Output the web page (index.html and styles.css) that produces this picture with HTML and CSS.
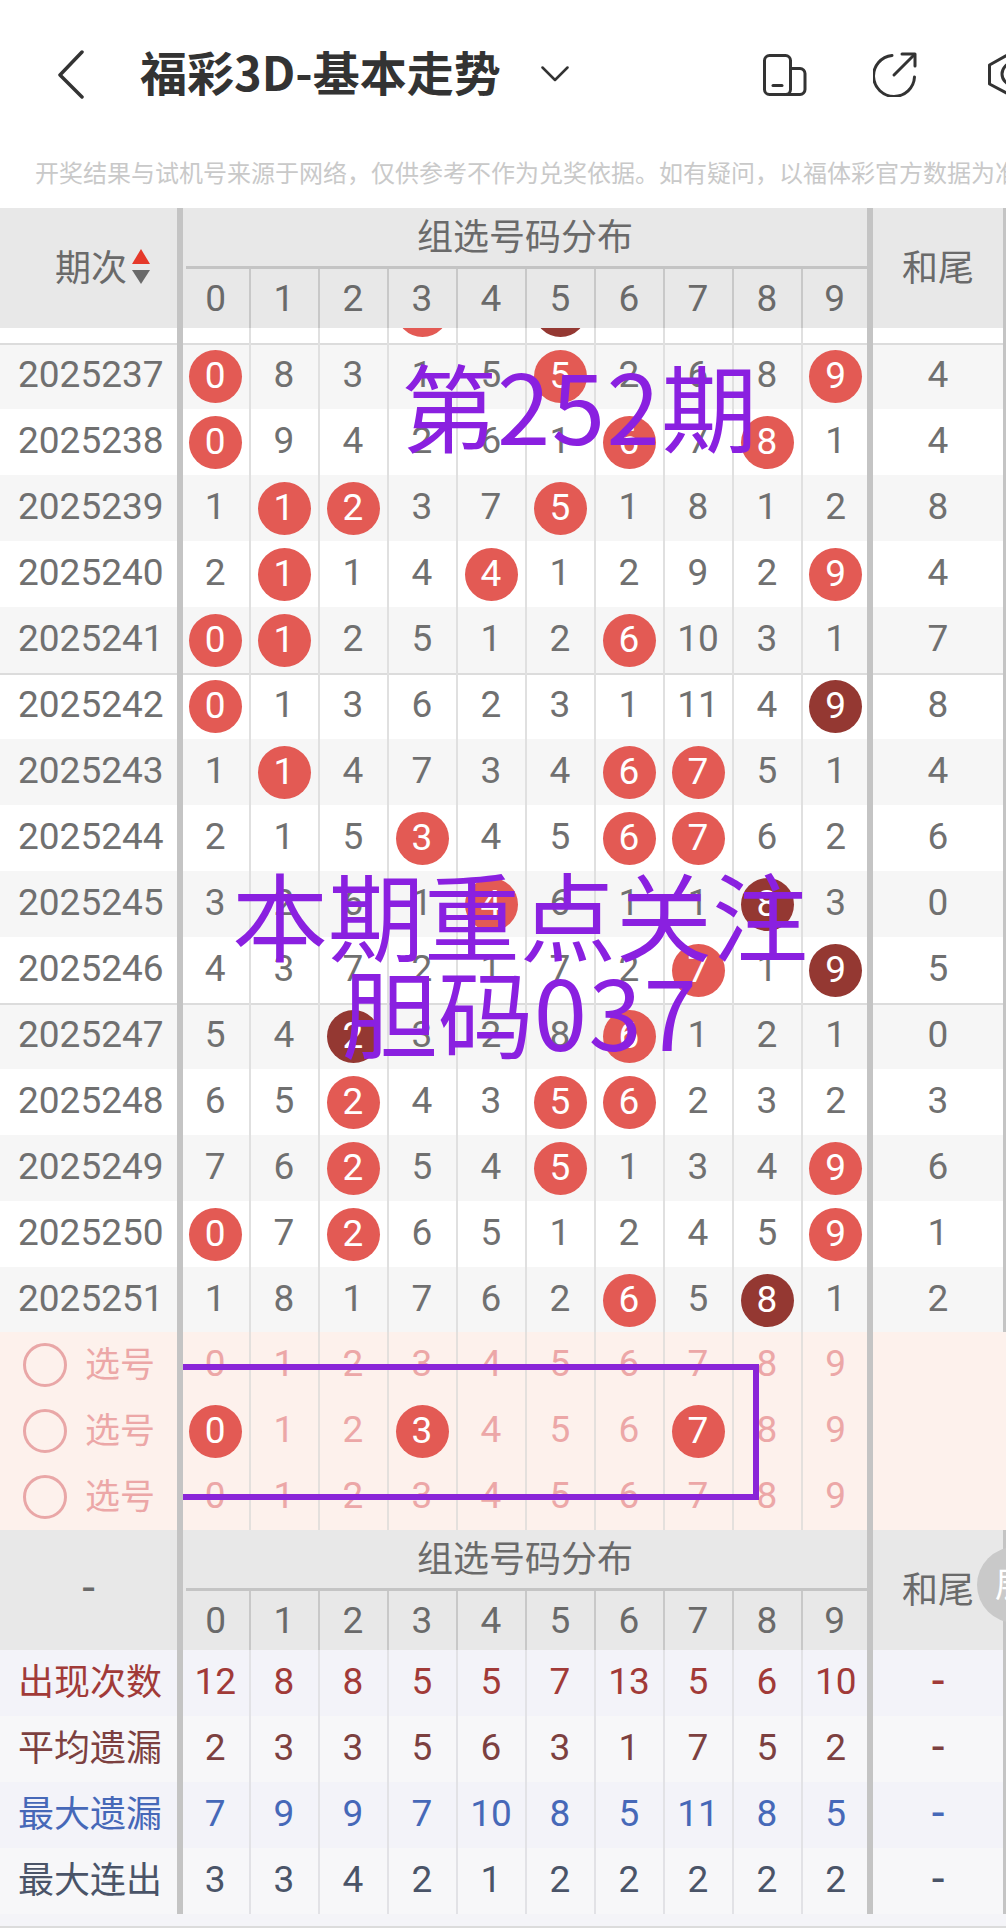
FILE: index.html
```html
<!DOCTYPE html>
<html lang="zh">
<head>
<meta charset="utf-8">
<title>福彩3D-基本走势</title>
<link rel="stylesheet" href="styles.css">
</head>
<body>
<div class="screen">
  <header class="topbar">
    <svg class="ic-back" viewBox="0 0 28 50"><path d="M25 3 3 26l22 22"/></svg>
    <h1 class="title">福彩3D-基本走势</h1>
    <svg class="ic-caret" viewBox="0 0 28 16"><path d="M1.5 1.5 14 14 26.500 1.500"/></svg>
    <div class="top-icons">
      <svg class="ic ic-phone" viewBox="0 0 44 42"><rect x="1.500" y="1.500" width="26" height="39" rx="5"/><path d="M27.500 14.500H37a5 5 0 0 1 5 5V35.500a5 5 0 0 1-5 5H22.500"/><path d="M10 31.500h9"/></svg>
      <svg class="ic ic-share" viewBox="0 0 46 46"><path d="M41.500 26A20.500 20.500 0 1 1 19 4.500"/><path d="M21 24 41.500 3.500"/><path d="M29 3H42V15"/></svg>
      <svg class="ic ic-hex" viewBox="0 0 40 46"><path d="M24 1.500 1.500 14V33L24 45 46 33V14Z"/><circle cx="25" cy="23" r="11"/></svg>
    </div>
  </header>
  <p class="notice">开奖结果与试机号来源于网络，仅供参考不作为兑奖依据。如有疑问，以福体彩官方数据为准。</p>

  <section class="thead">
    <div class="th-side th-period"><span class="th-label">期次</span><svg class="sort" viewBox="0 0 18 35"><path class="up" d="M9 0 18 15H0Z"/><path class="down" d="M0 21H18L9 35Z"/></svg></div>
    <div class="th-main">
      <div class="th-title">组选号码分布</div>
      <div class="th-nums"><span>0</span><span>1</span><span>2</span><span>3</span><span>4</span><span>5</span><span>6</span><span>7</span><span>8</span><span>9</span></div>
    </div>
    <div class="th-end"><span class="th-label">和尾</span></div>
  </section>

  <section class="tbody">
    <div class="row first"><span class="id">2025236</span><span class="c"></span><span class="c"></span><span class="c"></span><span class="c"><b class="ball">2</b></span><span class="c"></span><span class="c"><b class="ball dark">9</b></span><span class="c"></span><span class="c"></span><span class="c"></span><span class="c"></span><span class="end"></span></div>
    <div class="row sep"><span class="id">2025237</span><span class="c"><b class="ball">0</b></span><span class="c">8</span><span class="c">3</span><span class="c">1</span><span class="c">5</span><span class="c"><b class="ball">5</b></span><span class="c">2</span><span class="c">6</span><span class="c">8</span><span class="c"><b class="ball">9</b></span><span class="end">4</span></div>
    <div class="row"><span class="id">2025238</span><span class="c"><b class="ball">0</b></span><span class="c">9</span><span class="c">4</span><span class="c">2</span><span class="c">6</span><span class="c">1</span><span class="c"><b class="ball">6</b></span><span class="c">7</span><span class="c"><b class="ball">8</b></span><span class="c">1</span><span class="end">4</span></div>
    <div class="row"><span class="id">2025239</span><span class="c">1</span><span class="c"><b class="ball">1</b></span><span class="c"><b class="ball">2</b></span><span class="c">3</span><span class="c">7</span><span class="c"><b class="ball">5</b></span><span class="c">1</span><span class="c">8</span><span class="c">1</span><span class="c">2</span><span class="end">8</span></div>
    <div class="row"><span class="id">2025240</span><span class="c">2</span><span class="c"><b class="ball">1</b></span><span class="c">1</span><span class="c">4</span><span class="c"><b class="ball">4</b></span><span class="c">1</span><span class="c">2</span><span class="c">9</span><span class="c">2</span><span class="c"><b class="ball">9</b></span><span class="end">4</span></div>
    <div class="row"><span class="id">2025241</span><span class="c"><b class="ball">0</b></span><span class="c"><b class="ball">1</b></span><span class="c">2</span><span class="c">5</span><span class="c">1</span><span class="c">2</span><span class="c"><b class="ball">6</b></span><span class="c">10</span><span class="c">3</span><span class="c">1</span><span class="end">7</span></div>
    <div class="row sep"><span class="id">2025242</span><span class="c"><b class="ball">0</b></span><span class="c">1</span><span class="c">3</span><span class="c">6</span><span class="c">2</span><span class="c">3</span><span class="c">1</span><span class="c">11</span><span class="c">4</span><span class="c"><b class="ball dark">9</b></span><span class="end">8</span></div>
    <div class="row"><span class="id">2025243</span><span class="c">1</span><span class="c"><b class="ball">1</b></span><span class="c">4</span><span class="c">7</span><span class="c">3</span><span class="c">4</span><span class="c"><b class="ball">6</b></span><span class="c"><b class="ball">7</b></span><span class="c">5</span><span class="c">1</span><span class="end">4</span></div>
    <div class="row"><span class="id">2025244</span><span class="c">2</span><span class="c">1</span><span class="c">5</span><span class="c"><b class="ball">3</b></span><span class="c">4</span><span class="c">5</span><span class="c"><b class="ball">6</b></span><span class="c"><b class="ball">7</b></span><span class="c">6</span><span class="c">2</span><span class="end">6</span></div>
    <div class="row"><span class="id">2025245</span><span class="c">3</span><span class="c">2</span><span class="c">6</span><span class="c">1</span><span class="c"><b class="ball">4</b></span><span class="c">6</span><span class="c">1</span><span class="c">1</span><span class="c"><b class="ball dark">8</b></span><span class="c">3</span><span class="end">0</span></div>
    <div class="row"><span class="id">2025246</span><span class="c">4</span><span class="c">3</span><span class="c">7</span><span class="c">2</span><span class="c">1</span><span class="c">7</span><span class="c">2</span><span class="c"><b class="ball">7</b></span><span class="c">1</span><span class="c"><b class="ball dark">9</b></span><span class="end">5</span></div>
    <div class="row sep"><span class="id">2025247</span><span class="c">5</span><span class="c">4</span><span class="c"><b class="ball dark">2</b></span><span class="c">3</span><span class="c">2</span><span class="c">8</span><span class="c"><b class="ball">6</b></span><span class="c">1</span><span class="c">2</span><span class="c">1</span><span class="end">0</span></div>
    <div class="row"><span class="id">2025248</span><span class="c">6</span><span class="c">5</span><span class="c"><b class="ball">2</b></span><span class="c">4</span><span class="c">3</span><span class="c"><b class="ball">5</b></span><span class="c"><b class="ball">6</b></span><span class="c">2</span><span class="c">3</span><span class="c">2</span><span class="end">3</span></div>
    <div class="row"><span class="id">2025249</span><span class="c">7</span><span class="c">6</span><span class="c"><b class="ball">2</b></span><span class="c">5</span><span class="c">4</span><span class="c"><b class="ball">5</b></span><span class="c">1</span><span class="c">3</span><span class="c">4</span><span class="c"><b class="ball">9</b></span><span class="end">6</span></div>
    <div class="row"><span class="id">2025250</span><span class="c"><b class="ball">0</b></span><span class="c">7</span><span class="c"><b class="ball">2</b></span><span class="c">6</span><span class="c">5</span><span class="c">1</span><span class="c">2</span><span class="c">4</span><span class="c">5</span><span class="c"><b class="ball">9</b></span><span class="end">1</span></div>
    <div class="row"><span class="id">2025251</span><span class="c">1</span><span class="c">8</span><span class="c">1</span><span class="c">7</span><span class="c">6</span><span class="c">2</span><span class="c"><b class="ball">6</b></span><span class="c">5</span><span class="c"><b class="ball dark">8</b></span><span class="c">1</span><span class="end">2</span></div>
  </section>

  <section class="picks">
    <div class="row pick"><span class="id"><i class="radio"></i><span class="pick-label">选号</span></span><span class="c">0</span><span class="c">1</span><span class="c">2</span><span class="c">3</span><span class="c">4</span><span class="c">5</span><span class="c">6</span><span class="c">7</span><span class="c">8</span><span class="c">9</span><span class="end"></span></div>
    <div class="row pick"><span class="id"><i class="radio"></i><span class="pick-label">选号</span></span><span class="c"><b class="ball">0</b></span><span class="c">1</span><span class="c">2</span><span class="c"><b class="ball">3</b></span><span class="c">4</span><span class="c">5</span><span class="c">6</span><span class="c"><b class="ball">7</b></span><span class="c">8</span><span class="c">9</span><span class="end"></span></div>
    <div class="row pick"><span class="id"><i class="radio"></i><span class="pick-label">选号</span></span><span class="c">0</span><span class="c">1</span><span class="c">2</span><span class="c">3</span><span class="c">4</span><span class="c">5</span><span class="c">6</span><span class="c">7</span><span class="c">8</span><span class="c">9</span><span class="end"></span></div>
  </section>

  <section class="thead">
    <div class="th-side th-dash">-</div>
    <div class="th-main">
      <div class="th-title">组选号码分布</div>
      <div class="th-nums"><span>0</span><span>1</span><span>2</span><span>3</span><span>4</span><span>5</span><span>6</span><span>7</span><span>8</span><span>9</span></div>
    </div>
    <div class="th-end"><span class="th-label">和尾</span></div>
  </section>

  <section class="stats">
    <div class="row stat s-red"><span class="id">出现次数</span><span class="c">12</span><span class="c">8</span><span class="c">8</span><span class="c">5</span><span class="c">5</span><span class="c">7</span><span class="c">13</span><span class="c">5</span><span class="c">6</span><span class="c">10</span><span class="end">-</span></div>
    <div class="row stat s-brown"><span class="id">平均遗漏</span><span class="c">2</span><span class="c">3</span><span class="c">3</span><span class="c">5</span><span class="c">6</span><span class="c">3</span><span class="c">1</span><span class="c">7</span><span class="c">5</span><span class="c">2</span><span class="end">-</span></div>
    <div class="row stat s-blue"><span class="id">最大遗漏</span><span class="c">7</span><span class="c">9</span><span class="c">9</span><span class="c">7</span><span class="c">10</span><span class="c">8</span><span class="c">5</span><span class="c">11</span><span class="c">8</span><span class="c">5</span><span class="end">-</span></div>
    <div class="row stat s-slate"><span class="id">最大连出</span><span class="c">3</span><span class="c">3</span><span class="c">4</span><span class="c">2</span><span class="c">1</span><span class="c">2</span><span class="c">2</span><span class="c">2</span><span class="c">2</span><span class="c">2</span><span class="end">-</span></div>
  </section>
  <div class="page-end"></div>

  <div class="fab">展</div>
  <div class="mark mark-period">第<span class="wide">252</span>期</div>
  <div class="mark mark-focus">本期重点关注<br>胆码<span class="wide">037</span></div>
  <div class="mark-box"></div>
</div>
</body>
</html>
```
FILE: styles.css
```css
* { box-sizing: border-box; }
html, body { margin: 0; padding: 0; background: #fff; overflow: hidden; }
body { font-family: Roboto, "Noto Sans CJK SC", "Noto Sans", sans-serif; color: #707070; }

.screen { position: relative; width: 1006px; height: 1928px; overflow: hidden; }

/* top bar */
.topbar { display: flex; align-items: center; height: 148px; padding-left: 57px; }
.ic-back { width: 28px; height: 50px; flex: none; fill: none; stroke: #333; stroke-width: 3.500; stroke-linecap: round; stroke-linejoin: round; }
.title { margin: 0 0 7px 55px; font-family: "Noto Sans CJK SC", sans-serif; font-size: 47px; font-weight: 700; line-height: 50px; color: #333; white-space: nowrap; }
.ic-caret { width: 28px; height: 16px; margin-left: 40px; flex: none; fill: none; stroke: #333; stroke-width: 2.500; stroke-linecap: round; stroke-linejoin: round; }
.top-icons { display: flex; align-items: center; margin-left: auto; width: 243px; height: 46px; overflow: hidden; }
.ic { flex: none; fill: none; stroke: #333; stroke-width: 3; stroke-linecap: round; stroke-linejoin: round; }
.ic-phone { width: 44px; height: 42px; margin-top: 2px; }
.ic-share { width: 46px; height: 46px; margin-left: 66px; }
.ic-hex { width: 40px; height: 46px; margin-left: 69px; overflow: visible; }

.notice { margin: 0; height: 60px; padding-left: 35px; font-family: "Noto Sans CJK SC", sans-serif; font-size: 24px; line-height: 48px; color: #c9c9c9; white-space: nowrap; overflow: hidden; }

/* table header */
.thead { display: grid; grid-template-columns: 183px 684px 139px; height: 120px; background: #e8e8e8; font-family: "Noto Sans CJK SC", Roboto, sans-serif; font-size: 36px; color: #6a6a6a; }
.th-label { padding-bottom: 7px; }
.th-side { display: flex; align-items: center; border-right: 6px solid #c4c4c4; }
.th-period { padding-left: 55px; gap: 5px; }
.th-dash { justify-content: center; font-family: Roboto, sans-serif; font-size: 46px; padding-bottom: 6px; }
.sort { width: 18px; height: 35px; margin-top: -4px; }
.sort .up { fill: #e5392a; }
.sort .down { fill: #6a6a6a; }
.th-main { display: flex; flex-direction: column; }
.th-title { height: 58px; text-align: center; line-height: 53px; font-size: 36px; }
.th-nums { display: grid; grid-template-columns: 64.500px repeat(8, 69px) 64.500px; flex: 1; margin-left: 3px; border-top: 3px solid #c4c4c4; font-family: Roboto, sans-serif; font-size: 37px; }
.th-nums span { display: flex; align-items: center; justify-content: center; border-right: 2px solid #c8c8c8; }
.th-nums span:first-child { padding-right: 3px; }
.th-nums span:last-child { border-right: 0; }
.th-end { display: flex; align-items: center; justify-content: center; border-left: 6px solid #c4c4c4; border-right: 3px solid #c4c4c4; }

/* rows */
.tbody { height: 1004px; overflow: hidden; }
.row { display: grid; grid-template-columns: 183px 67.500px repeat(8, 69px) 64.500px 139px; height: 66px; background: #fff; font-size: 37px; color: #707070; }
.tbody .row:nth-child(even) { background: #f6f6f6; }
.row.first { margin-top: -51px; }
.row.sep { box-shadow: inset 0 2px 0 #dcdcdc; }
.id { display: flex; align-items: center; padding: 0 0 4px 18px; border-right: 6px solid #c4c4c4; white-space: nowrap; }
.c { display: flex; align-items: center; justify-content: center; padding-bottom: 3px; border-right: 2px solid #e0e0e0; }
.c:has(.ball) { padding-bottom: 0; }
.c:nth-child(2) { padding-right: 1px; }
.c:nth-child(11) { border-right: 0; padding-left: 2px; }
.end { display: flex; align-items: center; justify-content: center; padding-bottom: 3px; border-left: 6px solid #c4c4c4; border-right: 3px solid #c4c4c4; }
.ball { display: flex; align-items: center; justify-content: center; width: 53px; height: 53px; padding-bottom: 2px; border-radius: 50%; background: #e35a54; color: #fff; font-weight: 400; }
.ball.dark { background: #943832; }

/* pick rows */
.row.pick { background: #fdf1ec; color: #eca7a7; }
.pick .id { padding: 0 0 0 23px; font-family: "Noto Sans CJK SC", sans-serif; font-size: 35px; gap: 18px; }
.pick-label { padding-bottom: 8px; }
.pick .c { border-right-color: #e4e0dd; }
.pick .end { border-right: 0; }
.radio { width: 44px; height: 44px; border: 3px solid #e9a7a7; border-radius: 50%; flex: none; }

/* stat rows */
.stat .id { font-family: "Noto Sans CJK SC", sans-serif; font-size: 36px; padding-bottom: 8px; }
.stat .c { border-right-color: #e2e2e6; }
.stat .end { font-size: 46px; padding-bottom: 6px; }
.s-red, .s-blue { background: #f3f3f9; }
.s-brown, .s-slate { background: #f7f7f9; }
.s-red { color: #a13a38; }
.s-brown { color: #7c4040; }
.s-blue { color: #4668b8; }
.s-slate { color: #4a5468; }

.page-end { height: 14px; background: #f4f4f8; border-bottom: 2px solid #dcdcdc; }

/* overlays */
.fab { position: absolute; left: 977px; top: 1547px; width: 76px; height: 76px; padding-left: 18px; border-radius: 50%; background: #c9c9c9; color: #fff; font-family: "Noto Sans CJK SC", sans-serif; font-size: 34px; line-height: 72px; }
.mark { position: absolute; font-family: "Noto Sans CJK SC", sans-serif; font-size: 96px; color: #8a20e0; white-space: nowrap; text-align: center; }
.wide { letter-spacing: 1.500px; }
.mark-period { left: 401px; top: 325px; line-height: 158px; }
.mark-focus { left: 232px; top: 864px; line-height: 97px; }
.mark-box { position: absolute; left: 183px; top: 1364px; width: 576px; height: 136px; border: 6px solid #8a25d8; border-left: 0; }
```
